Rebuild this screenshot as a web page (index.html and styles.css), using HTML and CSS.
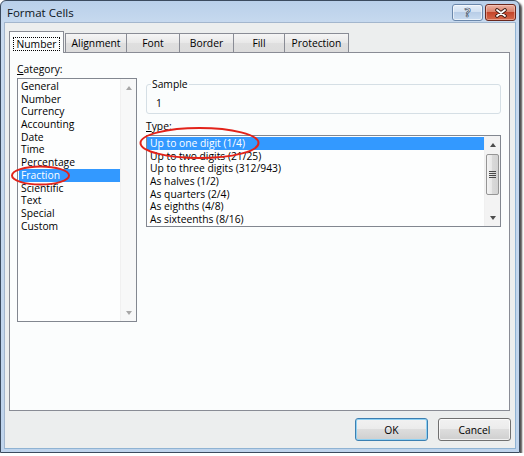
FILE: index.html
```html
<!DOCTYPE html>
<html>
<head>
<meta charset="utf-8">
<title>Format Cells</title>
<link rel="stylesheet" href="styles.css">
</head>
<body>
<div class="window">
  <div class="titlebar">
    <span class="title">Format Cells</span>
    <div class="caption">
      <span class="cap help">?</span>
      <span class="cap close">
        <svg width="14" height="10" viewBox="0 0 14 10">
          <path d="M3 2 L11 8 M11 2 L3 8" stroke="#3b1810" stroke-width="3.6" stroke-linecap="round" fill="none"/>
          <path d="M3 2 L11 8 M11 2 L3 8" stroke="#ffffff" stroke-width="1.8" stroke-linecap="round" fill="none"/>
        </svg>
      </span>
    </div>
  </div>
  <div class="client">
    <div class="tabs">
      <div class="tab active t-number"><span class="focus">Number</span></div>
      <div class="tab t-align">Alignment</div>
      <div class="tab t-font">Font</div>
      <div class="tab t-border">Border</div>
      <div class="tab t-fill">Fill</div>
      <div class="tab t-prot">Protection</div>
    </div>
    <div class="panel">
      <div class="col-left">
        <div class="label"><u>C</u>ategory:</div>
        <div class="listbox cat">
          <ul class="items">
            <li>General</li>
            <li>Number</li>
            <li>Currency</li>
            <li>Accounting</li>
            <li>Date</li>
            <li>Time</li>
            <li>Percentage</li>
            <li class="sel">Fraction</li>
            <li>Scientific</li>
            <li>Text</li>
            <li>Special</li>
            <li>Custom</li>
          </ul>
          <div class="vscroll off">
            <div class="sb-btn"><span class="arr up"></span></div>
            <div class="track"></div>
            <div class="sb-btn"><span class="arr down"></span></div>
          </div>
        </div>
      </div>
      <div class="col-right">
        <fieldset class="group">
          <legend>Sample</legend>
          <div class="sample">1</div>
        </fieldset>
        <div class="label type-label"><u>T</u>ype:</div>
        <div class="listbox types">
          <ul class="items">
            <li class="sel">Up to one digit (1/4)</li>
            <li>Up to two digits (21/25)</li>
            <li>Up to three digits (312/943)</li>
            <li>As halves (1/2)</li>
            <li>As quarters (2/4)</li>
            <li>As eighths (4/8)</li>
            <li>As sixteenths (8/16)</li>
          </ul>
          <div class="vscroll">
            <div class="sb-btn"><span class="arr up"></span></div>
            <div class="thumb"><span class="grip"></span></div>
            <div class="track"></div>
            <div class="sb-btn"><span class="arr down"></span></div>
          </div>
        </div>
      </div>
    </div>
    <div class="buttons">
      <button class="btn ok">OK</button>
      <button class="btn">Cancel</button>
    </div>
  </div>
  <svg class="marks" width="524" height="456" viewBox="0 0 524 456">
    <ellipse cx="40.5" cy="175.5" rx="28.5" ry="9" fill="none" stroke="#e2231a" stroke-width="2"/>
    <ellipse cx="199.5" cy="143" rx="59" ry="15" fill="none" stroke="#e2231a" stroke-width="2"/>
  </svg>
</div>
</body>
</html>
```

FILE: styles.css
```css
* { box-sizing: border-box; }
html, body { margin: 0; padding: 0; background: #ffffff; }
body {
  font-family: "Open Sans", "Noto Sans", sans-serif;
  font-size: 10.3px;
  color: #000;
}

.window {
  position: relative;
  width: 520px;
  height: 453px;
  border: 1px solid #3b4b5f;
  border-radius: 6px 6px 0 0;
  background: linear-gradient(#b9d0ea, #c8daef 24px, #bfd4ec);
  box-shadow: 2px 2px 2px rgba(0, 0, 0, 0.7);
  display: flex;
  flex-direction: column;
}

.titlebar {
  height: 21px;
  display: flex;
  justify-content: space-between;
  align-items: flex-start;
  padding: 0 3px 0 6px;
}
.title {
  font-size: 11.5px;
  line-height: 14px;
  margin-top: 5px;
  color: #0c1420;
}
.caption { display: flex; gap: 2px; margin-top: 3px; }
.cap {
  width: 31px;
  height: 17px;
  border-radius: 3px;
  display: flex;
  align-items: center;
  justify-content: center;
}
.help {
  border: 1px solid #6a87ab;
  background: linear-gradient(#e6eff9, #d0dff1 50%, #b8cde7 50%, #cadcf0);
  box-shadow: inset 0 0 0 1px rgba(255,255,255,0.6);
  color: #ffffff;
  font-weight: bold;
  font-size: 12px;
  line-height: 12px;
  -webkit-text-stroke: 0.7px #3a4d66;
}
.close {
  border: 1px solid #6a271c;
  background: linear-gradient(#eab1a3, #d87d66 50%, #c4452b 50%, #d5694b);
  box-shadow: inset 0 0 0 1px rgba(255,220,210,0.45);
}

.client {
  flex: 1;
  margin: 0 3px 3px 3px;
  background: #eceeee;
  border: 1px solid #a3b6cd;
  border-right-color: #8fb3d3;
  border-bottom-color: #8fb3d3;
  padding: 8px 5px 7px 4px;
  display: flex;
  flex-direction: column;
}

/* tabs */
.tabs {
  display: flex;
  align-items: flex-end;
  height: 22px;
  margin-bottom: -1px;
  position: relative;
  z-index: 1;
}
.tab {
  height: 19px;
  margin-bottom: 1px;
  margin-left: -1px;
  border: 1px solid #898c95;
  border-bottom: none;
  background: linear-gradient(#f5f5f5, #e8e8e8 50%, #dfdfdf 50%, #dcdcdc);
  display: flex;
  align-items: center;
  justify-content: center;
  line-height: 13px;
  white-space: nowrap;
}
.tab.active {
  height: 22px;
  margin: 0;
  background: #fbfdfd;
  align-items: flex-start;
  padding-top: 5px;
}
.focus {
  border: 1px dotted #000;
  padding: 0 3px;
  line-height: 12px;
}
.t-number { width: 55px; }
.t-align { width: 62px; margin-left: 1px; }
.t-font { width: 54px; }
.t-border { width: 55px; }
.t-fill { width: 52px; }
.t-prot { width: 65px; }

/* panel */
.panel {
  height: 359px;
  border: 1px solid #898c95;
  background: #fbfdfd;
  display: grid;
  grid-template-columns: 120px 355px;
  column-gap: 9px;
  padding: 0 7px 0 7px;
}
.col-left, .col-right { display: flex; flex-direction: column; }
.label { line-height: 13px; }
.col-left .label { margin-top: 10px; margin-bottom: 2px; }
.label u { text-decoration: underline; text-underline-offset: 1px; }

.listbox {
  display: flex;
  border: 1px solid #828790;
  background: #fdfefe;
  overflow: hidden;
}
.listbox.cat { height: 244px; }
.listbox.types { height: 92px; margin-top: 2px; }
.items {
  flex: 1;
  list-style: none;
  margin: 0;
  padding: 1px 0 0 1px;
  overflow: hidden;
}
.types .items { padding-left: 0; }
.items li {
  height: 12.7px;
  line-height: 12.7px;
  padding-left: 2px;
  white-space: nowrap;
}
.types .items li { padding-left: 3px; }
.items li.sel { background: #3399ff; color: #ffffff; }

/* scrollbars */
.vscroll {
  width: 16px;
  display: flex;
  flex-direction: column;
  background: #f3f3f3;
  border-left: 1px solid #f0f0f0;
}
.vscroll.off { background: #f7f8f8; }
.sb-btn {
  height: 17px;
  display: flex;
  align-items: center;
  justify-content: center;
}
.track { flex: 1; }
.arr { width: 0; height: 0; border-left: 3.5px solid transparent; border-right: 3.5px solid transparent; }
.arr.up { border-bottom: 4px solid #4d4d4d; }
.arr.down { border-top: 4px solid #4d4d4d; }
.off .arr.up { border-bottom-color: #a7a7a7; }
.off .arr.down { border-top-color: #a7a7a7; }
.thumb {
  height: 41px;
  margin: 1px 1px 0 1px;
  border: 1px solid #959595;
  border-radius: 2px;
  background: linear-gradient(90deg, #f4f4f4, #e6e6e6 50%, #d9d9d9 50%, #d3d3d3);
  display: flex;
  align-items: center;
  justify-content: center;
}
.grip {
  width: 7px;
  height: 7px;
  background: repeating-linear-gradient(#4a4a4a 0 1px, transparent 1px 2px);
}

/* sample group */
.group {
  margin: 25px 0 0 0;
  padding: 7px 9px 3px 9px;
  border: 1px solid #d5dfe5;
  border-radius: 3px;
  min-width: 0;
}
.group legend {
  padding: 0 1px;
  margin-left: -5px;
  line-height: 12px;
}
.sample { line-height: 13px; }
.type-label { margin-top: 6px; }

/* buttons */
.buttons {
  display: flex;
  justify-content: flex-end;
  gap: 10px;
  margin-top: 7px;
  margin-right: -1px;
}
.btn {
  width: 73px;
  height: 23px;
  font-family: inherit;
  font-size: 10.3px;
  color: #000;
  border: 1px solid #707070;
  border-radius: 3px;
  background: linear-gradient(#f2f2f2, #ebebeb 50%, #dddddd 50%, #cfcfcf);
  box-shadow: inset 0 0 0 1px rgba(255,255,255,0.7);
  padding: 0;
}
.btn.ok {
  border-color: #3c7fb1;
  box-shadow: inset 0 0 0 1px #8fd1f3;
}

.marks {
  position: absolute;
  left: -1px;
  top: -1px;
  pointer-events: none;
}
```
